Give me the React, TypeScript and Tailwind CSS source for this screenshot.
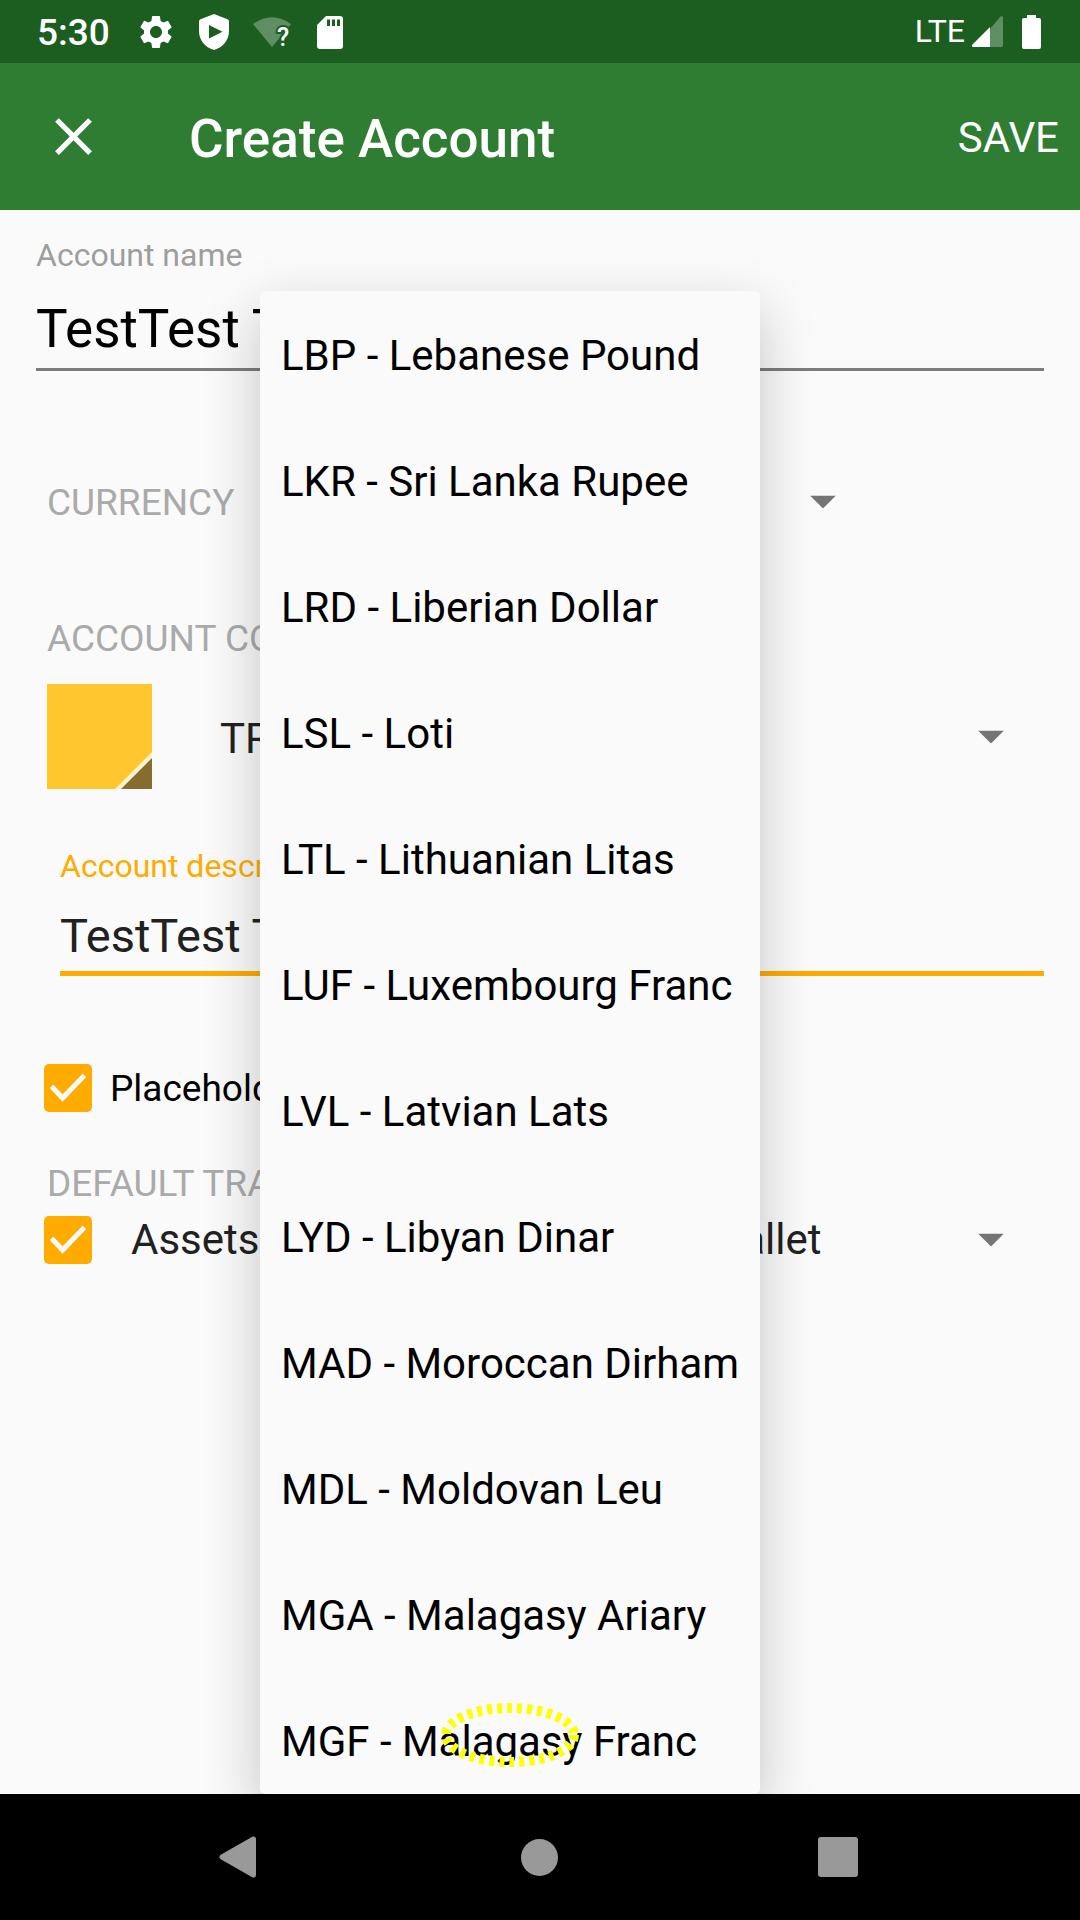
import { useState } from "react";
import { MdClose, MdSettings } from "react-icons/md";

const currencies = [
  "LBP - Lebanese Pound",
  "LKR - Sri Lanka Rupee",
  "LRD - Liberian Dollar",
  "LSL - Loti",
  "LTL - Lithuanian Litas",
  "LUF - Luxembourg Franc",
  "LVL - Latvian Lats",
  "LYD - Libyan Dinar",
  "MAD - Moroccan Dirham",
  "MDL - Moldovan Leu",
  "MGA - Malagasy Ariary",
  "MGF - Malagasy Franc",
];

function StatusBar() {
  return (
    <div className="flex h-[63px] shrink-0 items-center bg-[#1b5e20] px-[37px] text-white">
      <span className="pt-0.5 text-[37px] font-medium leading-[44px]">5:30</span>
      <div className="ml-[26px] flex items-center gap-5">
        <MdSettings className="size-10" />
        <svg viewBox="0 0 36 36" className="size-9" fill="currentColor">
          <path
            fillRule="evenodd"
            d="M18 0 L31.500 5.200 Q33 5.800 33 7.400 V17 C33 26 27 33.500 18 36 C9 33.500 3 26 3 17 V7.400 Q3 5.800 4.500 5.200 Z M13 11 V24.500 L26.500 17.700 Z"
          />
        </svg>
        <svg viewBox="0 0 40 40" className="size-10" fill="#fff">
          <path d="M1 12 Q20 -1.500 39 12 L20 35 Z" fillOpacity="0.3" />
          <text
            x="25"
            y="34"
            className="text-[25px] font-medium"
            stroke="#1b5e20"
            strokeWidth="4"
            paintOrder="stroke"
          >
            ?
          </text>
        </svg>
        <svg viewBox="0 0 36 36" className="size-9" fill="currentColor">
          <path
            fillRule="evenodd"
            d="M14 2 H28 Q31 2 31 5 V32 Q31 35 28 35 H8 Q5 35 5 32 V11 Z M15 5.500 V12 H18 V5.500 Z M20 5.500 V12 H23 V5.500 Z M25 5.500 V12 H28 V5.500 Z"
          />
        </svg>
      </div>
      <div className="ml-auto flex items-center">
        <span className="mb-0.5 text-[32px] leading-[38px]">LTE</span>
        <svg viewBox="0 0 32 32" className="ml-1.5 size-8" fill="currentColor">
          <path d="M30 0 Q32 0 32 2 V29 Q32 31 30 31 H19 V13 Z" fillOpacity="0.3" />
          <path d="M19 11 V31 H2 Q0 30 1.500 28.500 Z" />
        </svg>
        <svg viewBox="0 0 24 36" className="ml-4 h-9 w-6" fill="currentColor">
          <path d="M8 1 H17 V4 H20 Q22 4 22 6 V33 Q22 35 20 35 H5 Q3 35 3 33 V6 Q3 4 5 4 H8 Z" />
        </svg>
      </div>
    </div>
  );
}

function Arrow() {
  return (
    <svg
      viewBox="0 0 26 13"
      className="pointer-events-none absolute right-7 top-1/2 h-[13px] w-[26px] -translate-y-1/2"
    >
      <path d="M0 0 H26 L13 13 Z" fill="#757575" />
    </svg>
  );
}

function Check({ id, label }: { id: string; label?: string }) {
  return (
    <span className="relative block size-12 shrink-0">
      <input
        id={id}
        type="checkbox"
        defaultChecked
        aria-label={label}
        className="peer block size-12 appearance-none rounded-[5px] border-4 border-[#757575] checked:border-0 checked:bg-[#ffab00]"
      />
      <svg
        viewBox="0 0 48 48"
        className="pointer-events-none absolute inset-0 hidden size-12 peer-checked:block"
      >
        <path d="M7.500 22.200 L18.600 34 L40.500 11.200" fill="none" stroke="#fafafa" strokeWidth="5" />
      </svg>
    </span>
  );
}

function CurrencyMenu({ onPick }: { onPick: (c: string) => void }) {
  return (
    <div
      role="listbox"
      aria-label="Currency"
      className="absolute bottom-0 left-[260px] top-[81px] w-[500px] overflow-hidden rounded-[5px] bg-[#fafafa] pt-[2px] shadow-[0_20px_56px_rgba(0,0,0,0.22)]"
    >
      {currencies.map((c) => (
        <button
          key={c}
          role="option"
          aria-selected={false}
          onClick={() => onPick(c)}
          className="block h-[126px] w-full whitespace-nowrap pl-[21px] text-left text-[42px] leading-[50px] text-black"
        >
          {c}
        </button>
      ))}
    </div>
  );
}

export default function App() {
  const [currency, setCurrency] = useState("LSL - Loti");

  return (
    <div className="flex min-h-screen flex-col bg-[#fafafa] font-[Roboto,sans-serif]">
      <StatusBar />
      <header className="flex h-[147px] shrink-0 items-center bg-[#2e7d32] text-white">
        <button aria-label="Close" className="flex size-[147px] items-center justify-center">
          <MdClose className="size-[63px]" />
        </button>
        <h1 className="pl-[42px] pt-1 text-[53px] font-medium leading-[62px]">Create Account</h1>
        <button className="ml-auto px-[21px] pt-0.5 text-[42px] leading-[50px]">SAVE</button>
      </header>

      <main className="relative flex-1 overflow-hidden">
        <div className="px-9 pt-[25px]">
          <label htmlFor="name" className="block text-[32px] leading-10 text-[#9e9e9e]">
            Account name
          </label>
          <input
            id="name"
            defaultValue="TestTest Test"
            className="block h-24 w-full border-b-3 border-[#7c7c7c] pt-[15px] text-[53px] text-black outline-none"
          />
        </div>

        <div className="mt-[89px] flex h-[84px] items-center pl-[47px]">
          <label htmlFor="currency" className="w-[238px] pt-0.5 text-[37px] leading-[44px] text-[#aaaaaa]">
            CURRENCY
          </label>
          <div className="relative w-[579px]">
            <select
              id="currency"
              value={currency}
              onChange={(e) => setCurrency(e.target.value)}
              className="block h-[84px] w-full appearance-none text-[42px] text-[#212121] outline-none"
            >
              {currencies.map((c) => (
                <option key={c}>{c}</option>
              ))}
            </select>
            <Arrow />
          </div>
        </div>

        <label
          htmlFor="type"
          className="mt-[73px] block pl-[47px] text-[37px] leading-[44px] text-[#aaaaaa]"
        >
          ACCOUNT COLOR &amp; TYPE
        </label>
        <div className="mt-[23px] flex items-center pl-[47px] pr-12">
          <button aria-label="Account color" className="size-[105px] shrink-0 bg-[#ffc62d]">
            <svg viewBox="0 0 105 105" className="size-[105px]">
              <path d="M105 68 L68 105 H105 Z" fill="#fff3d0" />
              <path d="M105 74 L74 105 H105 Z" fill="#866d2f" />
            </svg>
          </button>
          <div className="relative ml-[68px] flex-1">
            <select
              id="type"
              className="block h-[105px] w-full appearance-none pt-1 text-[42px] text-[#212121] outline-none"
            >
              <option>TRADING</option>
            </select>
            <Arrow />
          </div>
        </div>

        <div className="mt-[57px] pl-[60px] pr-9">
          <label htmlFor="description" className="block text-[32px] leading-10 text-[#ffab00]">
            Account description
          </label>
          <input
            id="description"
            defaultValue="TestTest Test"
            className="block h-[90px] w-full border-b-5 border-[#ffab00] pt-[13px] text-[47px] text-[#212121] outline-none"
          />
        </div>

        <div className="mt-[88px] flex items-center pl-11">
          <Check id="placeholder" />
          <label htmlFor="placeholder" className="pl-[18px] pt-0.5 text-[37px] leading-[44px] text-black">
            Placeholder account
          </label>
        </div>

        <label
          htmlFor="transfer"
          className="mt-[50px] block pl-[47px] text-[37px] leading-[44px] text-[#aaaaaa]"
        >
          DEFAULT TRANSFER ACCOUNT
        </label>
        <div className="mt-[10px] flex items-center pl-11 pr-12">
          <Check id="use-transfer" label="Use default transfer account" />
          <div className="relative ml-[39px] flex-1">
            <select
              id="transfer"
              className="block h-12 w-full appearance-none text-[42px] leading-[48px] text-[#212121] outline-none"
            >
              <option>Assets:Current Assets:Cash in Wallet</option>
            </select>
            <Arrow />
          </div>
        </div>

        <CurrencyMenu onPick={setCurrency} />
        <svg
          viewBox="0 0 140 66"
          className="pointer-events-none absolute bottom-[26px] left-[440px] h-[66px] w-[140px]"
        >
          <ellipse
            cx="70"
            cy="33"
            rx="64"
            ry="27"
            fill="none"
            stroke="#ffff00"
            strokeWidth="10"
            strokeDasharray="5 5"
          />
        </svg>
      </main>

      <nav className="grid h-[126px] shrink-0 grid-cols-[476px_126px_1fr] items-center bg-black">
        <button aria-label="Back" className="flex justify-center">
          <svg viewBox="0 0 38 42" className="h-[42px] w-[38px]">
            <path
              d="M34.500 3 V39 L3 21 Z"
              fill="#999"
              stroke="#999"
              strokeWidth="5"
              strokeLinejoin="round"
            />
          </svg>
        </button>
        <button aria-label="Home" className="flex justify-center">
          <span className="size-[37px] rounded-full bg-[#999]" />
        </button>
        <button aria-label="Recent apps" className="mr-1.5 flex justify-center">
          <span className="size-10 rounded-[3px] bg-[#999]" />
        </button>
      </nav>
    </div>
  );
}
